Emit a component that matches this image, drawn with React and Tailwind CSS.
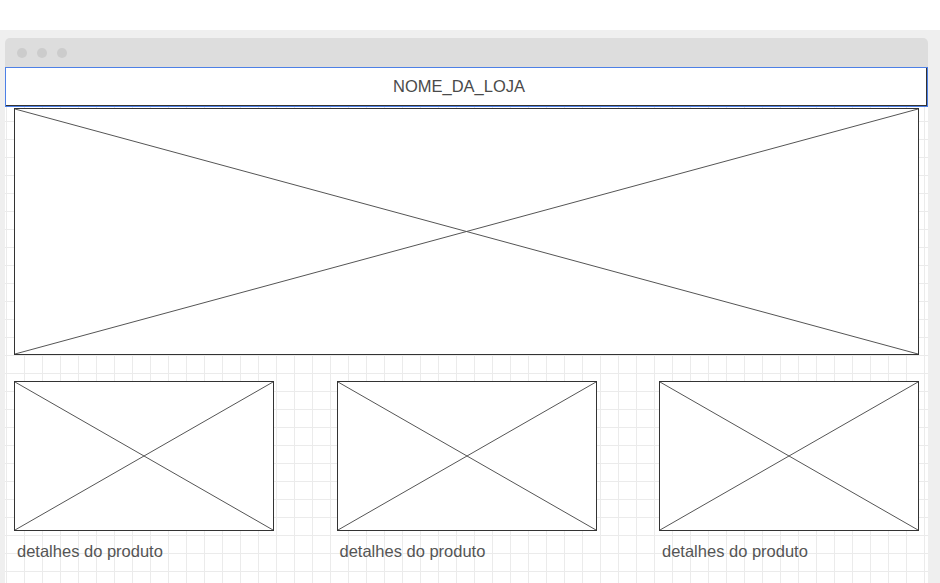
import React from "react";

function XBox({ className }) {
  return (
    <div className={"relative border border-[#333] bg-white " + className}>
      <svg className="absolute inset-0 w-full h-full" preserveAspectRatio="none" viewBox="0 0 100 100">
        <line x1="0" y1="0" x2="100" y2="100" stroke="#555" strokeWidth="1" vectorEffect="non-scaling-stroke" />
        <line x1="100" y1="0" x2="0" y2="100" stroke="#555" strokeWidth="1" vectorEffect="non-scaling-stroke" />
      </svg>
    </div>
  );
}

function Product() {
  return (
    <div className="flex flex-col w-[260px]">
      <XBox className="h-[150px] w-[260px]" />
      <div className="mt-[11px] pl-[3px] text-[16.5px] leading-[18px] text-[#555]">detalhes do produto</div>
    </div>
  );
}

export default function App() {
  return (
    <div className="w-[940px] h-[583px] bg-white overflow-hidden font-['Liberation_Sans',Arial,sans-serif]">
      <div className="h-[30px] bg-white" />
      <div className="h-[553px] bg-[#efefef] pl-[5px] pt-[8px]">
        <div className="w-[923px] h-full flex flex-col rounded-t-[5px] bg-[#dddddd] overflow-hidden">
          <div className="h-[29px] shrink-0 flex items-center gap-[10px] pl-[12px]">
            <div className="w-[10px] h-[10px] rounded-full bg-[#cccccc]" />
            <div className="w-[10px] h-[10px] rounded-full bg-[#cccccc]" />
            <div className="w-[10px] h-[10px] rounded-full bg-[#cccccc]" />
          </div>
          <div className="flex-1 flex flex-col bg-white bg-[linear-gradient(#ebebeb_1px,transparent_1px),linear-gradient(90deg,#ebebeb_1px,transparent_1px)] bg-[size:18px_18px] bg-[position:1px_0px]">
            <div className="h-[40px] shrink-0 border border-[#4d80e6]">
              <div className="h-full border-r border-b border-[#333] bg-white flex items-center justify-center pr-[14px] text-[16.5px] text-[#4a4a4a]">
                NOME_DA_LOJA
              </div>
            </div>
            <div className="px-[9px] pt-[1px]">
              <XBox className="h-[247px] w-full" />
              <div className="mt-[26px] flex justify-between">
                <Product />
                <Product />
                <Product />
              </div>
            </div>
          </div>
        </div>
      </div>
    </div>
  );
}
